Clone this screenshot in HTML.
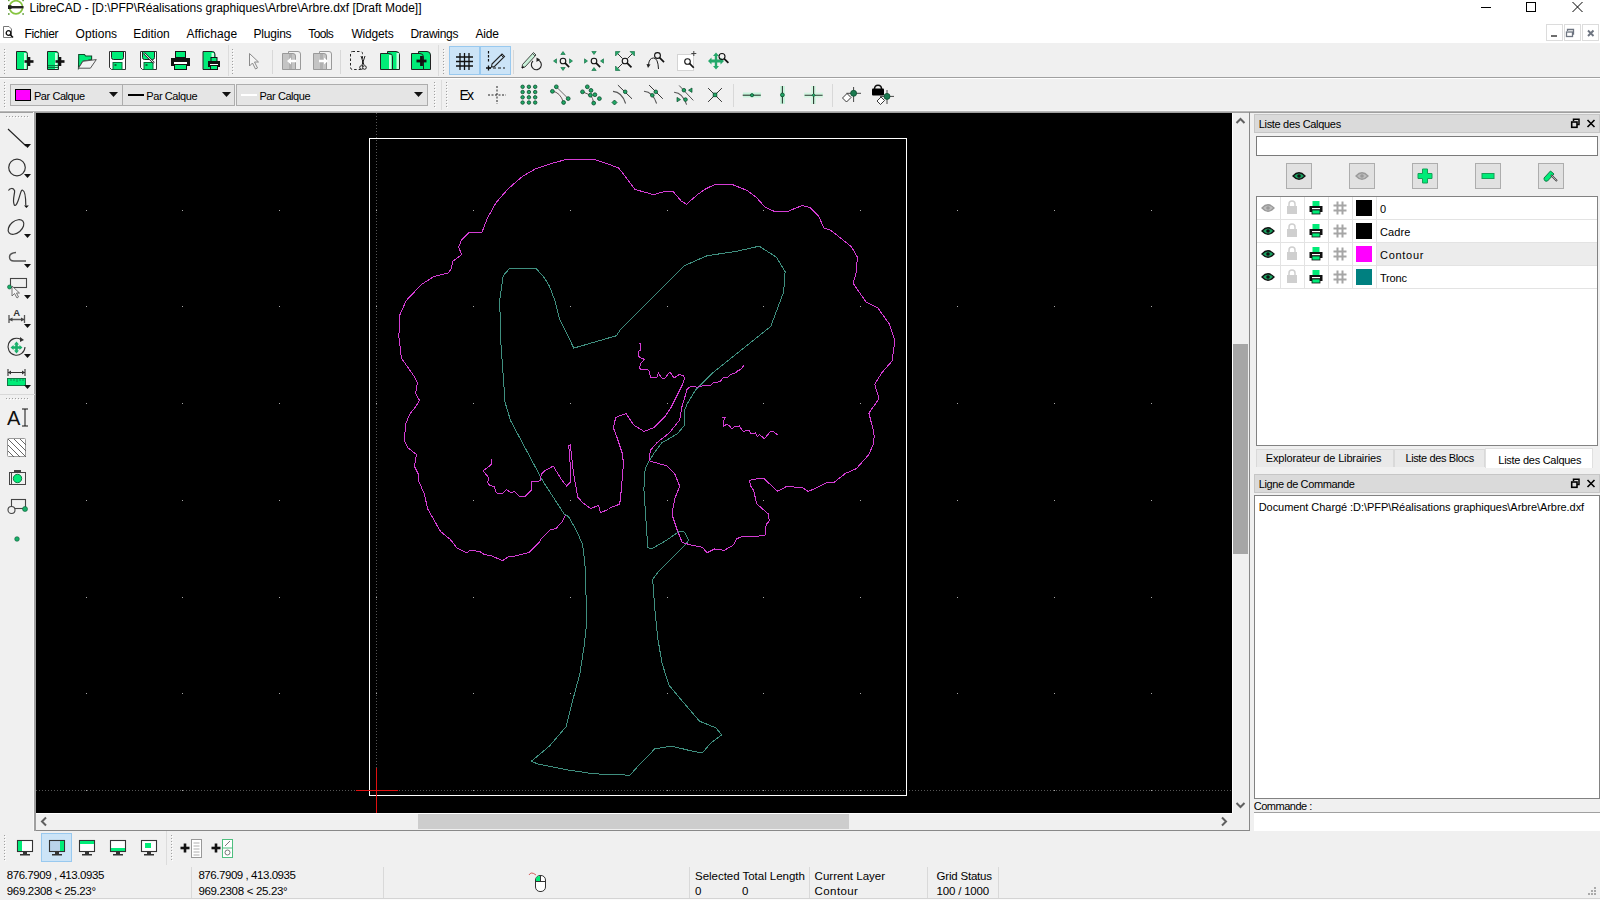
<!DOCTYPE html>
<html><head><meta charset="utf-8">
<style>
*{margin:0;padding:0;box-sizing:border-box}
html,body{width:1600px;height:900px;overflow:hidden;background:#f0f0f0;font-family:"Liberation Sans",sans-serif;font-size:11px;color:#000}
.a{position:absolute;display:block}
.t{position:absolute;white-space:nowrap;line-height:1}
</style></head><body>
<div class="a" style="left:0px;top:0px;width:1600px;height:43px;background:#fff;"></div>
<svg class="a" style="left:0px;top:0px" width="26" height="17" viewBox="0 0 26 17" ><circle cx="16" cy="7.3" r="6.6" fill="none" stroke="#86c440" stroke-width="1.7"/><rect x="8" y="6" width="15.5" height="2.4" fill="#222"/><rect x="8" y="5.2" width="3.5" height="3.8" fill="#222"/><g fill="#5e9a38"><rect x="8" y="0" width="1.6" height="1.2"/><rect x="22.3" y="0" width="1.6" height="1.2"/><rect x="8" y="13.2" width="1.6" height="1.6"/><rect x="22.3" y="13.2" width="1.6" height="1.6"/></g></svg>
<div class="t" style="left:29.50px;top:2px;font-size:12px;letter-spacing:-0.021px;">LibreCAD - [D:\PFP\Réalisations graphiques\Arbre\Arbre.dxf [Draft Mode]]</div>
<svg class="a" style="left:1476px;top:0px" width="124" height="16" viewBox="0 0 124 16" ><rect x="5" y="7" width="10" height="1" fill="#000"/><rect x="50.5" y="2.5" width="9" height="9" fill="none" stroke="#000"/><path d="M96.5 2 L106.5 12 M106.5 2 L96.5 12" stroke="#000" stroke-width="1"/></svg>
<svg class="a" style="left:2px;top:26px" width="13" height="13" viewBox="0 0 13 13" ><path d="M1.5 0.5 H7 L9.5 3 V11.5 H1.5 Z" fill="#fff" stroke="#777"/><circle cx="6.5" cy="7" r="2.3" fill="none" stroke="#111" stroke-width="1.3"/><path d="M8 8.5 L11 11.5" stroke="#111" stroke-width="1.6"/></svg>
<div class="t" style="left:24.50px;top:28px;font-size:12px;letter-spacing:-0.333px;">Fichier</div>
<div class="t" style="left:75.60px;top:28px;font-size:12px;letter-spacing:0.025px;">Options</div>
<div class="t" style="left:133.20px;top:28px;font-size:12px;letter-spacing:-0.025px;">Edition</div>
<div class="t" style="left:186.50px;top:28px;font-size:12px;letter-spacing:0.119px;">Affichage</div>
<div class="t" style="left:253.50px;top:28px;font-size:12px;letter-spacing:-0.208px;">Plugins</div>
<div class="t" style="left:308.30px;top:28px;font-size:12px;letter-spacing:-0.650px;">Tools</div>
<div class="t" style="left:351.40px;top:28px;font-size:12px;letter-spacing:-0.175px;">Widgets</div>
<div class="t" style="left:410.40px;top:28px;font-size:12px;letter-spacing:-0.271px;">Drawings</div>
<div class="t" style="left:475.40px;top:28px;font-size:12px;letter-spacing:-0.133px;">Aide</div>
<div class="a" style="left:1546px;top:24px;width:17px;height:17px;background:#fff;border:1px solid #dcdcdc"></div>
<div class="a" style="left:1564px;top:24px;width:17px;height:17px;background:#fff;border:1px solid #dcdcdc"></div>
<div class="a" style="left:1582px;top:24px;width:17px;height:17px;background:#fff;border:1px solid #dcdcdc"></div>
<svg class="a" style="left:1546px;top:24px" width="54" height="17" viewBox="0 0 54 17" ><rect x="5" y="11" width="6" height="2" fill="#6d6d6d"/><path d="M21.5 7 V5.5 H27.5 V10 H26" fill="none" stroke="#6d7480" stroke-width="1.3"/><rect x="20.5" y="8" width="6" height="4.5" fill="#fff" stroke="#6d7480" stroke-width="1.3"/><path d="M42 6.5 L47.5 12 M47.5 6.5 L42 12" stroke="#6d7480" stroke-width="1.9"/></svg>
<div class="a" style="left:0px;top:77px;width:1600px;height:1px;background:#a0a0a0;"></div>
<div class="a" style="left:0px;top:78px;width:1600px;height:1px;background:#fff;"></div>
<div class="a" style="left:0px;top:110px;width:1600px;height:1px;background:#f6f6f6;"></div>
<div class="a" style="left:0px;top:111px;width:1600px;height:1px;background:#b8b8b8;"></div>
<div class="a" style="left:0px;top:112px;width:1600px;height:1px;background:#a0a0a0;"></div>
<svg class="a" style="left:4px;top:49px" width="2" height="25" viewBox="0 0 2 25" ><rect x="0" y="0" width="1" height="1" fill="#a0a0a0"/><rect x="1" y="1" width="1" height="1" fill="#fff"/><rect x="0" y="3" width="1" height="1" fill="#a0a0a0"/><rect x="1" y="4" width="1" height="1" fill="#fff"/><rect x="0" y="6" width="1" height="1" fill="#a0a0a0"/><rect x="1" y="7" width="1" height="1" fill="#fff"/><rect x="0" y="9" width="1" height="1" fill="#a0a0a0"/><rect x="1" y="10" width="1" height="1" fill="#fff"/><rect x="0" y="12" width="1" height="1" fill="#a0a0a0"/><rect x="1" y="13" width="1" height="1" fill="#fff"/><rect x="0" y="15" width="1" height="1" fill="#a0a0a0"/><rect x="1" y="16" width="1" height="1" fill="#fff"/><rect x="0" y="18" width="1" height="1" fill="#a0a0a0"/><rect x="1" y="19" width="1" height="1" fill="#fff"/><rect x="0" y="21" width="1" height="1" fill="#a0a0a0"/><rect x="1" y="22" width="1" height="1" fill="#fff"/><rect x="0" y="24" width="1" height="1" fill="#a0a0a0"/><rect x="1" y="25" width="1" height="1" fill="#fff"/></svg>
<svg class="a" style="left:232px;top:49px" width="2" height="25" viewBox="0 0 2 25" ><rect x="0" y="0" width="1" height="1" fill="#a0a0a0"/><rect x="1" y="1" width="1" height="1" fill="#fff"/><rect x="0" y="3" width="1" height="1" fill="#a0a0a0"/><rect x="1" y="4" width="1" height="1" fill="#fff"/><rect x="0" y="6" width="1" height="1" fill="#a0a0a0"/><rect x="1" y="7" width="1" height="1" fill="#fff"/><rect x="0" y="9" width="1" height="1" fill="#a0a0a0"/><rect x="1" y="10" width="1" height="1" fill="#fff"/><rect x="0" y="12" width="1" height="1" fill="#a0a0a0"/><rect x="1" y="13" width="1" height="1" fill="#fff"/><rect x="0" y="15" width="1" height="1" fill="#a0a0a0"/><rect x="1" y="16" width="1" height="1" fill="#fff"/><rect x="0" y="18" width="1" height="1" fill="#a0a0a0"/><rect x="1" y="19" width="1" height="1" fill="#fff"/><rect x="0" y="21" width="1" height="1" fill="#a0a0a0"/><rect x="1" y="22" width="1" height="1" fill="#fff"/><rect x="0" y="24" width="1" height="1" fill="#a0a0a0"/><rect x="1" y="25" width="1" height="1" fill="#fff"/></svg>
<svg class="a" style="left:443px;top:49px" width="2" height="25" viewBox="0 0 2 25" ><rect x="0" y="0" width="1" height="1" fill="#a0a0a0"/><rect x="1" y="1" width="1" height="1" fill="#fff"/><rect x="0" y="3" width="1" height="1" fill="#a0a0a0"/><rect x="1" y="4" width="1" height="1" fill="#fff"/><rect x="0" y="6" width="1" height="1" fill="#a0a0a0"/><rect x="1" y="7" width="1" height="1" fill="#fff"/><rect x="0" y="9" width="1" height="1" fill="#a0a0a0"/><rect x="1" y="10" width="1" height="1" fill="#fff"/><rect x="0" y="12" width="1" height="1" fill="#a0a0a0"/><rect x="1" y="13" width="1" height="1" fill="#fff"/><rect x="0" y="15" width="1" height="1" fill="#a0a0a0"/><rect x="1" y="16" width="1" height="1" fill="#fff"/><rect x="0" y="18" width="1" height="1" fill="#a0a0a0"/><rect x="1" y="19" width="1" height="1" fill="#fff"/><rect x="0" y="21" width="1" height="1" fill="#a0a0a0"/><rect x="1" y="22" width="1" height="1" fill="#fff"/><rect x="0" y="24" width="1" height="1" fill="#a0a0a0"/><rect x="1" y="25" width="1" height="1" fill="#fff"/></svg>
<svg class="a" style="left:4px;top:82px" width="2" height="26" viewBox="0 0 2 26" ><rect x="0" y="0" width="1" height="1" fill="#a0a0a0"/><rect x="1" y="1" width="1" height="1" fill="#fff"/><rect x="0" y="3" width="1" height="1" fill="#a0a0a0"/><rect x="1" y="4" width="1" height="1" fill="#fff"/><rect x="0" y="6" width="1" height="1" fill="#a0a0a0"/><rect x="1" y="7" width="1" height="1" fill="#fff"/><rect x="0" y="9" width="1" height="1" fill="#a0a0a0"/><rect x="1" y="10" width="1" height="1" fill="#fff"/><rect x="0" y="12" width="1" height="1" fill="#a0a0a0"/><rect x="1" y="13" width="1" height="1" fill="#fff"/><rect x="0" y="15" width="1" height="1" fill="#a0a0a0"/><rect x="1" y="16" width="1" height="1" fill="#fff"/><rect x="0" y="18" width="1" height="1" fill="#a0a0a0"/><rect x="1" y="19" width="1" height="1" fill="#fff"/><rect x="0" y="21" width="1" height="1" fill="#a0a0a0"/><rect x="1" y="22" width="1" height="1" fill="#fff"/><rect x="0" y="24" width="1" height="1" fill="#a0a0a0"/><rect x="1" y="25" width="1" height="1" fill="#fff"/></svg>
<svg class="a" style="left:434px;top:82px" width="2" height="26" viewBox="0 0 2 26" ><rect x="0" y="0" width="1" height="1" fill="#a0a0a0"/><rect x="1" y="1" width="1" height="1" fill="#fff"/><rect x="0" y="3" width="1" height="1" fill="#a0a0a0"/><rect x="1" y="4" width="1" height="1" fill="#fff"/><rect x="0" y="6" width="1" height="1" fill="#a0a0a0"/><rect x="1" y="7" width="1" height="1" fill="#fff"/><rect x="0" y="9" width="1" height="1" fill="#a0a0a0"/><rect x="1" y="10" width="1" height="1" fill="#fff"/><rect x="0" y="12" width="1" height="1" fill="#a0a0a0"/><rect x="1" y="13" width="1" height="1" fill="#fff"/><rect x="0" y="15" width="1" height="1" fill="#a0a0a0"/><rect x="1" y="16" width="1" height="1" fill="#fff"/><rect x="0" y="18" width="1" height="1" fill="#a0a0a0"/><rect x="1" y="19" width="1" height="1" fill="#fff"/><rect x="0" y="21" width="1" height="1" fill="#a0a0a0"/><rect x="1" y="22" width="1" height="1" fill="#fff"/><rect x="0" y="24" width="1" height="1" fill="#a0a0a0"/><rect x="1" y="25" width="1" height="1" fill="#fff"/></svg>
<svg class="a" style="left:446px;top:82px" width="2" height="26" viewBox="0 0 2 26" ><rect x="0" y="0" width="1" height="1" fill="#a0a0a0"/><rect x="1" y="1" width="1" height="1" fill="#fff"/><rect x="0" y="3" width="1" height="1" fill="#a0a0a0"/><rect x="1" y="4" width="1" height="1" fill="#fff"/><rect x="0" y="6" width="1" height="1" fill="#a0a0a0"/><rect x="1" y="7" width="1" height="1" fill="#fff"/><rect x="0" y="9" width="1" height="1" fill="#a0a0a0"/><rect x="1" y="10" width="1" height="1" fill="#fff"/><rect x="0" y="12" width="1" height="1" fill="#a0a0a0"/><rect x="1" y="13" width="1" height="1" fill="#fff"/><rect x="0" y="15" width="1" height="1" fill="#a0a0a0"/><rect x="1" y="16" width="1" height="1" fill="#fff"/><rect x="0" y="18" width="1" height="1" fill="#a0a0a0"/><rect x="1" y="19" width="1" height="1" fill="#fff"/><rect x="0" y="21" width="1" height="1" fill="#a0a0a0"/><rect x="1" y="22" width="1" height="1" fill="#fff"/><rect x="0" y="24" width="1" height="1" fill="#a0a0a0"/><rect x="1" y="25" width="1" height="1" fill="#fff"/></svg>
<div class="a" style="left:228px;top:45px;width:1px;height:31px;background:#dcdcdc;"></div>
<div class="a" style="left:438px;top:45px;width:1px;height:31px;background:#dcdcdc;"></div>
<div class="a" style="left:272px;top:50px;width:1px;height:24px;background:#d8d8d8;"></div>
<div class="a" style="left:340px;top:50px;width:1px;height:24px;background:#d8d8d8;"></div>
<div class="a" style="left:513px;top:50px;width:1px;height:24px;background:#d8d8d8;"></div>
<div class="a" style="left:441px;top:80px;width:1px;height:30px;background:#dcdcdc;"></div>
<div class="a" style="left:733px;top:84px;width:1px;height:23px;background:#d8d8d8;"></div>
<div class="a" style="left:832px;top:84px;width:1px;height:23px;background:#d8d8d8;"></div>
<svg class="a" style="left:14px;top:50px" width="22" height="22" viewBox="0 0 22 22" ><path d="M2.5 1.5 H11 Q13.5 1.5 13.5 4.5 V19.5 H2.5 Z" fill="#00ec78" stroke="#222"/><rect x="10" y="3" width="2.5" height="16" fill="#c8ffe0"/><rect x="10.5" y="10.2" width="9.0" height="2.6" fill="#111"/><rect x="13.7" y="7.0" width="2.6" height="9.0" fill="#111"/></svg>
<svg class="a" style="left:45px;top:50px" width="22" height="22" viewBox="0 0 22 22" ><path d="M2.5 1.5 H11 Q13.5 1.5 13.5 4.5 V19.5 H2.5 Z" fill="#00ec78" stroke="#222"/><rect x="10" y="3" width="2.5" height="16" fill="#c8ffe0"/><rect x="3" y="15" width="10" height="1.2" fill="#087a40"/><rect x="3" y="17" width="10" height="1" fill="#087a40"/><rect x="10.5" y="10.2" width="9.0" height="2.6" fill="#111"/><rect x="13.7" y="7.0" width="2.6" height="9.0" fill="#111"/></svg>
<svg class="a" style="left:76px;top:50px" width="22" height="22" viewBox="0 0 22 22" ><path d="M2.7 4.5 H8.4 L9.7 6 H15.6 V9.6 L11.9 10.4 L6.9 11.3 L2.5 18.2 Z" fill="#00ec78" stroke="#0d4a2a" stroke-width="1.1"/><path d="M2.5 18.2 L6.9 11.3 L20.3 9.6 L14.4 18.2 Z" fill="#f2f2f2" stroke="#555" stroke-width="1"/></svg>
<svg class="a" style="left:108px;top:50px" width="20" height="22" viewBox="0 0 20 22" ><path d="M1.5 1.5 H17.5 V19.5 H3.5 L1.5 17.5 Z" fill="#fff" stroke="#333"/><path d="M3.5 1.5 H15.5 V7.5 Q15.5 9.5 13.5 9.5 H5.5 Q3.5 9.5 3.5 7.5 Z" fill="#00ec78" stroke="#222"/><rect x="5" y="12.5" width="9" height="7" fill="#00ec78" stroke="#0c6a3a"/><rect x="6.5" y="14" width="2" height="2" fill="#0c6a3a"/></svg>
<svg class="a" style="left:139px;top:50px" width="20" height="22" viewBox="0 0 20 22" ><path d="M1.5 1.5 H17.5 V19.5 H3.5 L1.5 17.5 Z" fill="#fff" stroke="#333"/><path d="M3.5 1.5 H15.5 V7.5 Q15.5 9.5 13.5 9.5 H5.5 Q3.5 9.5 3.5 7.5 Z" fill="#00ec78" stroke="#222"/><rect x="5" y="12.5" width="9" height="7" fill="#00ec78" stroke="#0c6a3a"/><rect x="6.5" y="14" width="2" height="2" fill="#0c6a3a"/><path d="M5 3 L15 13" stroke="#333" stroke-width="2.2"/><path d="M5.5 3.5 L14.5 12.5" stroke="#ddd" stroke-width="1"/></svg>
<svg class="a" style="left:170px;top:50px" width="21" height="22" viewBox="0 0 21 22" ><rect x="5.5" y="1.5" width="10" height="6" fill="#00ec78" stroke="#111"/><path d="M1 8 H20 V16 H17 V12 H4 V16 H1 Z" fill="#111"/><rect x="4" y="12" width="13" height="2" fill="#fff"/><rect x="4.5" y="14.5" width="12" height="5" fill="#00ec78" stroke="#111"/></svg>
<svg class="a" style="left:201px;top:50px" width="21" height="22" viewBox="0 0 21 22" ><path d="M2.0 1.5 H11.5 Q14.0 1.5 14.0 4.5 V19.5 H2.0 Z" fill="#00ec78" stroke="#222"/><rect x="10.5" y="3" width="2.5" height="16" fill="#c8ffe0"/><rect x="10" y="7.5" width="6" height="4" fill="#00ec78" stroke="#111"/><path d="M7 11 H19 V17 H17 V14 H9 V17 H7 Z" fill="#111"/><rect x="9" y="14" width="8" height="1.5" fill="#fff"/><rect x="9.5" y="15.5" width="7" height="4" fill="#00ec78" stroke="#111"/></svg>
<svg class="a" style="left:247px;top:51px" width="14" height="20" viewBox="0 0 14 20" ><path d="M2.5 2.5 V15 L5.5 12 L8.5 18 L10.5 17 L7.5 11 H11.5 Z" fill="#f4f4f4" stroke="#8a8a8a"/></svg>
<svg class="a" style="left:281px;top:50px" width="21" height="22" viewBox="0 0 21 22" ><path d="M7.5 1.5 H17 Q19.5 1.5 19.5 4 V19.5 H7.5 Z" fill="#f2f2f2" stroke="#9a9a9a"/><path d="M1.5 3.5 H12 Q14.5 3.5 14.5 6 V19.5 H1.5 Z" fill="#c4c4c4" stroke="#9a9a9a"/><rect x="8" y="4" width="3" height="15" fill="#b0b0b0"/><path d="M6 11 L10 7.5 V9.8 H15 V12.2 H10 V14.5 Z" fill="#fff"/></svg>
<svg class="a" style="left:312px;top:50px" width="21" height="22" viewBox="0 0 21 22" ><path d="M7.5 1.5 H17 Q19.5 1.5 19.5 4 V19.5 H7.5 Z" fill="#f2f2f2" stroke="#9a9a9a"/><path d="M1.5 3.5 H12 Q14.5 3.5 14.5 6 V19.5 H1.5 Z" fill="#c4c4c4" stroke="#9a9a9a"/><rect x="8" y="4" width="3" height="15" fill="#b0b0b0"/><path d="M16 11 L12 7.5 V9.8 H7 V12.2 H12 V14.5 Z" fill="#fff"/></svg>
<svg class="a" style="left:349px;top:50px" width="20" height="22" viewBox="0 0 20 22" ><rect x="1.5" y="1.5" width="12" height="18" rx="2" fill="none" stroke="#222" stroke-dasharray="2.5,2"/><path d="M12 6 L15 15 M16 6 L13 15" stroke="#222" stroke-width="1"/><circle cx="12.5" cy="17.5" r="1.8" fill="#f0f0f0" stroke="#222"/><circle cx="15.5" cy="17.5" r="1.8" fill="#f0f0f0" stroke="#222"/></svg>
<svg class="a" style="left:379px;top:50px" width="22" height="22" viewBox="0 0 22 22" ><path d="M8.5 1.5 H17 Q20.5 1.5 20.5 5 V19.5 H8.5 Z" fill="#00ec78" stroke="#222"/><path d="M1.5 3.5 H10 Q13.5 3.5 13.5 7 V19.5 H1.5 Z" fill="#00ec78" stroke="#222"/><rect x="10" y="5" width="2.5" height="14" fill="#c8ffe0"/><rect x="17.5" y="3" width="2.5" height="16" fill="#c8ffe0"/></svg>
<svg class="a" style="left:410px;top:50px" width="22" height="22" viewBox="0 0 22 22" ><path d="M8.5 1.5 H17 Q20.5 1.5 20.5 5 V19.5 H8.5 Z" fill="#00ec78" stroke="#222"/><path d="M1.5 3.5 H10 Q13.5 3.5 13.5 7 V19.5 H1.5 Z" fill="#00ec78" stroke="#222"/><rect x="6.5" y="9.6" width="10" height="2.8" fill="#111"/><rect x="10.1" y="6" width="2.8" height="10" fill="#111"/></svg>
<div class="a" style="left:449px;top:46px;width:31px;height:29px;background:#cce4f7;border:1px solid #99c9ef"></div>
<div class="a" style="left:480px;top:46px;width:31px;height:29px;background:#cce4f7;border:1px solid #99c9ef"></div>
<svg class="a" style="left:454px;top:51px" width="20" height="20" viewBox="0 0 20 20" ><path d="M6 2 V19 M10.5 2 V19 M15 2 V19 M2 6 H19 M2 10.5 H19 M2 15 H19" stroke="#111" stroke-width="1.3"/></svg>
<svg class="a" style="left:485px;top:50px" width="22" height="22" viewBox="0 0 22 22" ><path d="M3.5 1 V13" stroke="#111" stroke-dasharray="2.5,1.5" stroke-width="1.2"/><path d="M3 18 H20" stroke="#111" stroke-dasharray="3,2" stroke-width="1.2"/><path d="M1 18 H6 M3.5 15.5 V20.5" stroke="#111" stroke-width="1.3"/><path d="M7 14 L17 4 L19.5 6.5 L9.5 16.5 L6.5 17 Z" fill="none" stroke="#222" stroke-width="1.1"/><path d="M16 5 L18.5 7.5" stroke="#222"/></svg>
<svg class="a" style="left:521px;top:50px" width="22" height="22" viewBox="0 0 22 22" ><path d="M1.5 14.5 L12.5 2.5 L15 5 L4 17 L1 18 Z" fill="#c8f0d8" stroke="#333" stroke-width=".9"/><path d="M11.5 3.5 L14 6" stroke="#333" stroke-width=".8"/><path d="M1 18 L2.5 16.5" stroke="#111" stroke-width="1.6"/><path d="M12 11 A5 5 0 1 0 17 10" fill="none" stroke="#222" stroke-width="1.1"/><path d="M15.5 7.5 L19 9.5 L15.5 12 Z" fill="#222"/></svg>
<svg class="a" style="left:552px;top:50px" width="22" height="22" viewBox="0 0 22 22" ><path d="M11 1.5 L13.2 4.5 H8.8 Z M11 20.5 L13.2 17.5 H8.8 Z M1.5 11 L4.5 8.8 V13.2 Z M20.5 11 L17.5 8.8 V13.2 Z" fill="#24a86a" stroke="#0f6a3e" stroke-width=".6"/><circle cx="11" cy="11" r="2.8" fill="none" stroke="#111" stroke-width="1.1"/><path d="M12.959999999999999 12.959999999999999 L17.16 17.16" stroke="#111" stroke-width="1.7"/></svg>
<svg class="a" style="left:583px;top:50px" width="22" height="22" viewBox="0 0 22 22" ><path d="M11 4.5 L13.2 1.5 H8.8 Z M11 17.5 L13.2 20.5 H8.8 Z M4.5 11 L1.5 8.8 V13.2 Z M17.5 11 L20.5 8.8 V13.2 Z" fill="#24a86a" stroke="#0f6a3e" stroke-width=".6"/><circle cx="11" cy="11" r="2.8" fill="none" stroke="#111" stroke-width="1.1"/><path d="M12.959999999999999 12.959999999999999 L17.16 17.16" stroke="#111" stroke-width="1.7"/></svg>
<svg class="a" style="left:614px;top:50px" width="22" height="22" viewBox="0 0 22 22" ><path d="M3.5 3.5 L8.5 8.5 M18.5 3.5 L13.5 8.5 M3.5 18.5 L8.5 13.5" stroke="#222" stroke-width=".9"/><path d="M1.5 1.5 H6 L1.5 6 Z M20.5 1.5 H16 L20.5 6 Z M1.5 20.5 H6 L1.5 16 Z" fill="#24a86a" stroke="#0f6a3e" stroke-width=".6"/><circle cx="11" cy="11" r="2.8" fill="none" stroke="#111" stroke-width="1.1"/><path d="M12.959999999999999 12.959999999999999 L17.46 17.46" stroke="#111" stroke-width="1.7"/></svg>
<svg class="a" style="left:645px;top:50px" width="22" height="22" viewBox="0 0 22 22" ><path d="M3.5 15 Q4 8 8.5 8 Q13 8 13.5 19" fill="none" stroke="#222" stroke-width="1"/><path d="M1.5 14 L5.5 14.5 L3 18 Z" fill="#222"/><circle cx="12.5" cy="5.5" r="2.9" fill="none" stroke="#111" stroke-width="1.1"/><path d="M14.53 7.529999999999999 L19.03 12.03" stroke="#111" stroke-width="1.7"/></svg>
<svg class="a" style="left:676px;top:50px" width="22" height="22" viewBox="0 0 22 22" ><rect x="1.5" y="4.5" width="16" height="16" fill="#fff" stroke="#d4d4d4"/><circle cx="11.5" cy="11.5" r="2.8" fill="none" stroke="#111" stroke-width="1.1"/><path d="M13.459999999999999 13.459999999999999 L17.759999999999998 17.759999999999998" stroke="#111" stroke-width="1.7"/><path d="M17.8 1 V6 M15.3 3.5 H20.3" stroke="#444" stroke-width="1"/></svg>
<svg class="a" style="left:707px;top:50px" width="22" height="22" viewBox="0 0 22 22" ><path d="M9 2.5 L12 6 H10.2 V9.5 H13.5 V7.5 L17 11 L13.5 14.5 V12.5 H10.2 V16 H12 L9 19.5 L6 16 H7.8 V12.5 H4.5 V14.5 L1 11 L4.5 7.5 V9.5 H7.8 V6 H6 Z" fill="#24a86a"/><circle cx="15" cy="6.5" r="3" fill="none" stroke="#111" stroke-width="1.1"/><path d="M17.1 8.6 L21.400000000000002 12.899999999999999" stroke="#111" stroke-width="1.7"/></svg>
<div class="a" style="left:10px;top:84px;width:113px;height:22px;background:#e5e5e5;border:1px solid #adadad"></div>

<div class="a" style="left:122px;top:84px;width:113px;height:22px;background:#e5e5e5;border:1px solid #adadad"></div>

<div class="a" style="left:236px;top:84px;width:192px;height:22px;background:#e5e5e5;border:1px solid #adadad"></div>

<div class="a" style="left:15px;top:89px;width:16px;height:12px;background:#ff00ff;border:1px solid #000"></div>
<div class="t" style="left:33.90px;top:91px;font-size:11px;letter-spacing:-0.422px;">Par Calque</div>
<div class="a" style="left:128px;top:94px;width:16px;height:2px;background:#000;"></div>
<div class="t" style="left:146.30px;top:91px;font-size:11px;letter-spacing:-0.422px;">Par Calque</div>
<div class="a" style="left:241px;top:94px;width:16px;height:2px;background:#fff;"></div>
<div class="t" style="left:259.40px;top:91px;font-size:11px;letter-spacing:-0.422px;">Par Calque</div>
<svg class="a" style="left:109px;top:92px" width="9" height="5" viewBox="0 0 9 5" ><path d="M0 0 H9 L4.5 5 Z" fill="#111"/></svg>
<svg class="a" style="left:222px;top:92px" width="9" height="5" viewBox="0 0 9 5" ><path d="M0 0 H9 L4.5 5 Z" fill="#111"/></svg>
<svg class="a" style="left:414px;top:92px" width="9" height="5" viewBox="0 0 9 5" ><path d="M0 0 H9 L4.5 5 Z" fill="#111"/></svg>
<div class="t" style="left:459.40px;top:88px;font-size:14px;letter-spacing:-1.750px;">Ex</div>
<svg class="a" style="left:487px;top:85px" width="20" height="20" viewBox="0 0 20 20" ><path d="M10 1 V19 M1 10 H19" stroke="#222" stroke-width="1" stroke-dasharray="2,1.5"/></svg>
<svg class="a" style="left:519px;top:84px" width="20" height="22" viewBox="0 0 20 22" ><circle cx="3.6" cy="2.8" r="1.75" fill="#1fa865" stroke="#0b4a2c" stroke-width=".8"/><circle cx="3.6" cy="8.05" r="1.75" fill="#1fa865" stroke="#0b4a2c" stroke-width=".8"/><circle cx="3.6" cy="13.3" r="1.75" fill="#1fa865" stroke="#0b4a2c" stroke-width=".8"/><circle cx="3.6" cy="18.55" r="1.75" fill="#1fa865" stroke="#0b4a2c" stroke-width=".8"/><circle cx="9.9" cy="2.8" r="1.75" fill="#1fa865" stroke="#0b4a2c" stroke-width=".8"/><circle cx="9.9" cy="8.05" r="1.75" fill="#1fa865" stroke="#0b4a2c" stroke-width=".8"/><circle cx="9.9" cy="13.3" r="1.75" fill="#1fa865" stroke="#0b4a2c" stroke-width=".8"/><circle cx="9.9" cy="18.55" r="1.75" fill="#1fa865" stroke="#0b4a2c" stroke-width=".8"/><circle cx="16.2" cy="2.8" r="1.75" fill="#1fa865" stroke="#0b4a2c" stroke-width=".8"/><circle cx="16.2" cy="8.05" r="1.75" fill="#1fa865" stroke="#0b4a2c" stroke-width=".8"/><circle cx="16.2" cy="13.3" r="1.75" fill="#1fa865" stroke="#0b4a2c" stroke-width=".8"/><circle cx="16.2" cy="18.55" r="1.75" fill="#1fa865" stroke="#0b4a2c" stroke-width=".8"/></svg>
<svg class="a" style="left:549px;top:84px" width="22" height="22" viewBox="0 0 22 22" ><path d="M7.3 2.8 L19.2 14.6" stroke="#6a6a6a" stroke-width="1"/><path d="M3.4 7.3 Q11 8 14.6 18.5" fill="none" stroke="#6a5a5a" stroke-width="1"/><circle cx="7.3" cy="2.8" r="1.9" fill="#1fa865" stroke="#0b4a2c" stroke-width=".8"/><circle cx="3.4" cy="7.3" r="1.9" fill="#1fa865" stroke="#0b4a2c" stroke-width=".8"/><circle cx="19.2" cy="14.6" r="1.9" fill="#1fa865" stroke="#0b4a2c" stroke-width=".8"/><circle cx="14.6" cy="18.5" r="1.9" fill="#1fa865" stroke="#0b4a2c" stroke-width=".8"/></svg>
<svg class="a" style="left:580px;top:84px" width="22" height="22" viewBox="0 0 22 22" ><path d="M2.5 7.8 L10.5 11.2 Q13 14 13.7 19" fill="none" stroke="#6a5a5a" stroke-width="1"/><circle cx="7.3" cy="2.8" r="1.9" fill="#1fa865" stroke="#0b4a2c" stroke-width=".8"/><circle cx="2.5" cy="7.8" r="1.9" fill="#1fa865" stroke="#0b4a2c" stroke-width=".8"/><circle cx="11" cy="6.4" r="1.9" fill="#1fa865" stroke="#0b4a2c" stroke-width=".8"/><circle cx="10.4" cy="11.2" r="1.9" fill="#1fa865" stroke="#0b4a2c" stroke-width=".8"/><circle cx="14.9" cy="10.7" r="1.9" fill="#1fa865" stroke="#0b4a2c" stroke-width=".8"/><circle cx="19.4" cy="14.6" r="1.9" fill="#1fa865" stroke="#0b4a2c" stroke-width=".8"/><circle cx="13.7" cy="19.1" r="1.9" fill="#1fa865" stroke="#0b4a2c" stroke-width=".8"/></svg>
<svg class="a" style="left:611px;top:84px" width="22" height="22" viewBox="0 0 22 22" ><path d="M6.9 1.1 L21 14.8" stroke="#222" stroke-width=".9"/><path d="M2 7.4 Q11 8 14.6 19.5" fill="none" stroke="#555" stroke-width="1.1"/><circle cx="14.2" cy="7.8" r="1.8" fill="#1fa865" stroke="#0b4a2c" stroke-width=".8"/><path d="M3.5 16 L6 18.5 L3.5 21 L1 18.5 Z" fill="#1fa865" stroke="#0b4a2c" stroke-width=".8"/></svg>
<svg class="a" style="left:642px;top:84px" width="22" height="22" viewBox="0 0 22 22" ><path d="M7.1 1.1 L20.8 14.8" stroke="#222" stroke-width=".9"/><path d="M2 7.2 Q11 8 14.6 19.5" fill="none" stroke="#555" stroke-width="1.1"/><circle cx="13.8" cy="7.8" r="1.8" fill="#1fa865" stroke="#0b4a2c" stroke-width=".8"/><circle cx="10.3" cy="11.3" r="1.8" fill="#1fa865" stroke="#0b4a2c" stroke-width=".8"/></svg>
<svg class="a" style="left:673px;top:84px" width="22" height="22" viewBox="0 0 22 22" ><path d="M6.2 1.5 L20.3 16.4" stroke="#555" stroke-width="1"/><path d="M1.1 8.2 Q10 9 13.6 20.7" fill="none" stroke="#555" stroke-width="1.1"/><circle cx="10.9" cy="6.2" r="1.8" fill="#1fa865" stroke="#0b4a2c" stroke-width=".8"/><circle cx="12.5" cy="15.6" r="1.8" fill="#1fa865" stroke="#0b4a2c" stroke-width=".8"/><path d="M15.5 6.2 L19 4 V8.4 Z M7.5 15.6 L4 13.4 V17.8 Z" fill="#1fa865" stroke="#0b4a2c" stroke-width=".7"/></svg>
<svg class="a" style="left:704px;top:84px" width="22" height="22" viewBox="0 0 22 22" ><path d="M4.1 4.1 L17.9 17.9 M17.9 4.1 L4.1 17.9" stroke="#222" stroke-width=".9"/><rect x="9.2" y="9.1" width="3.6" height="3.6" fill="#1fa865" stroke="#0b4a2c" stroke-width=".8"/></svg>
<svg class="a" style="left:741px;top:84px" width="22" height="22" viewBox="0 0 22 22" ><rect x="2" y="8.5" width="18" height="5" fill="#c8f4dc"/><path d="M1.7 11.2 H19.8" stroke="#2a3a30" stroke-width="1.1"/><circle cx="11" cy="11.2" r="1.6" fill="#1fa865" stroke="#0b4a2c" stroke-width=".8"/></svg>
<svg class="a" style="left:772px;top:84px" width="22" height="22" viewBox="0 0 22 22" ><rect x="8" y="2" width="5" height="18" fill="#c8f4dc"/><path d="M10.4 2 V19.6" stroke="#2a3a30" stroke-width="1.1"/><circle cx="10.4" cy="10.9" r="1.9" fill="#1fa865" stroke="#0b4a2c" stroke-width=".8"/></svg>
<svg class="a" style="left:802px;top:84px" width="22" height="22" viewBox="0 0 22 22" ><rect x="9" y="2" width="5" height="18" fill="#d4f6e2"/><rect x="2" y="8.7" width="19" height="5" fill="#d4f6e2"/><path d="M11.6 2 V20 M2.6 11.2 H20.6" stroke="#2a3a30" stroke-width="1.1"/><path d="M11.6 9.5 L13.3 11.2 L11.6 12.9 L9.9 11.2 Z" fill="#1fa865" stroke="#0b4a2c" stroke-width=".6"/></svg>
<svg class="a" style="left:840px;top:84px" width="22" height="22" viewBox="0 0 22 22" ><path d="M2.5 14 L7 9.5 L11 13.5 L6.5 18 Z" fill="#fff" stroke="#222" stroke-width=".9"/><path d="M13.6 3 V18 M6.5 9.3 H21" stroke="#333" stroke-width=".9"/><circle cx="13.6" cy="9.3" r="3" fill="#1a7a50" stroke="#0b4a2c" stroke-width=".8"/></svg>
<svg class="a" style="left:870px;top:84px" width="24" height="24" viewBox="0 0 24 24" ><path d="M4.5 5 Q4.5 1.2 8 1.2 Q11.5 1.2 11.5 5" fill="none" stroke="#111" stroke-width="1.5"/><rect x="2" y="4.5" width="12" height="7" fill="#000" rx="1"/><path d="M7 17 L11 13 L14.5 16.5 L10.5 20.5 Z" fill="#fff" stroke="#222" stroke-width=".9"/><path d="M17 6 V20 M10 12.4 H24" stroke="#333" stroke-width=".9"/><circle cx="17" cy="12.4" r="3" fill="#1a7a50" stroke="#0b4a2c" stroke-width=".8"/></svg>
<div class="a" style="left:33px;top:112px;width:1px;height:719px;background:#f7f7f7;"></div>
<div class="a" style="left:34px;top:112px;width:2px;height:719px;background:#a0a0a0;"></div>
<svg class="a" style="left:6px;top:116px" width="24" height="2" viewBox="0 0 24 2" ><rect x="0" y="0" width="1" height="1" fill="#a0a0a0"/><rect x="1" y="1" width="1" height="1" fill="#fff"/><rect x="3" y="0" width="1" height="1" fill="#a0a0a0"/><rect x="4" y="1" width="1" height="1" fill="#fff"/><rect x="6" y="0" width="1" height="1" fill="#a0a0a0"/><rect x="7" y="1" width="1" height="1" fill="#fff"/><rect x="9" y="0" width="1" height="1" fill="#a0a0a0"/><rect x="10" y="1" width="1" height="1" fill="#fff"/><rect x="12" y="0" width="1" height="1" fill="#a0a0a0"/><rect x="13" y="1" width="1" height="1" fill="#fff"/><rect x="15" y="0" width="1" height="1" fill="#a0a0a0"/><rect x="16" y="1" width="1" height="1" fill="#fff"/><rect x="18" y="0" width="1" height="1" fill="#a0a0a0"/><rect x="19" y="1" width="1" height="1" fill="#fff"/><rect x="21" y="0" width="1" height="1" fill="#a0a0a0"/><rect x="22" y="1" width="1" height="1" fill="#fff"/></svg>
<svg class="a" style="left:6px;top:398px" width="24" height="2" viewBox="0 0 24 2" ><rect x="0" y="0" width="1" height="1" fill="#a0a0a0"/><rect x="1" y="1" width="1" height="1" fill="#fff"/><rect x="3" y="0" width="1" height="1" fill="#a0a0a0"/><rect x="4" y="1" width="1" height="1" fill="#fff"/><rect x="6" y="0" width="1" height="1" fill="#a0a0a0"/><rect x="7" y="1" width="1" height="1" fill="#fff"/><rect x="9" y="0" width="1" height="1" fill="#a0a0a0"/><rect x="10" y="1" width="1" height="1" fill="#fff"/><rect x="12" y="0" width="1" height="1" fill="#a0a0a0"/><rect x="13" y="1" width="1" height="1" fill="#fff"/><rect x="15" y="0" width="1" height="1" fill="#a0a0a0"/><rect x="16" y="1" width="1" height="1" fill="#fff"/><rect x="18" y="0" width="1" height="1" fill="#a0a0a0"/><rect x="19" y="1" width="1" height="1" fill="#fff"/><rect x="21" y="0" width="1" height="1" fill="#a0a0a0"/><rect x="22" y="1" width="1" height="1" fill="#fff"/></svg>
<div class="a" style="left:0px;top:394px;width:35px;height:1px;background:#d8d8d8;"></div>
<svg class="a" style="left:4px;top:126px" width="28" height="24" viewBox="0 0 28 24" ><path d="M4 3 L22 20" stroke="#222" stroke-width="1.1"/><path d="M20 18 H27 L23.5 22 Z" fill="#111"/></svg>
<svg class="a" style="left:4px;top:156px" width="28" height="24" viewBox="0 0 28 24" ><circle cx="13" cy="11.5" r="8.3" fill="none" stroke="#333" stroke-width="1.2"/><path d="M20 18 H27 L23.5 22 Z" fill="#111"/></svg>
<svg class="a" style="left:4px;top:186px" width="28" height="24" viewBox="0 0 28 24" ><path d="M4.4 4.5 C6 2 9.5 1.5 10.6 4.8 C11 8 8 14 10.3 19 C11.5 20 12.5 19 14 15 C16 10 17 3 18.7 4.2 C21 5 21.8 9 21.8 19.5" fill="none" stroke="#333" stroke-width="1.2"/><path d="M20 19.5 H24.9 L22.4 22 Z" fill="#111"/></svg>
<svg class="a" style="left:4px;top:216px" width="28" height="24" viewBox="0 0 28 24" ><ellipse cx="12" cy="11" rx="9" ry="5.8" transform="rotate(-40 12 11)" fill="none" stroke="#333" stroke-width="1.2"/><path d="M20 18 H27 L23.5 22 Z" fill="#111"/></svg>
<svg class="a" style="left:4px;top:246px" width="28" height="24" viewBox="0 0 28 24" ><path d="M12 6.5 Q5.5 7 5.5 11 Q5.5 15 10 15 H22" fill="none" stroke="#555" stroke-width="1.4"/><path d="M20 18 H27 L23.5 22 Z" fill="#111"/></svg>
<svg class="a" style="left:4px;top:276px" width="28" height="24" viewBox="0 0 28 24" ><rect x="6.5" y="2.5" width="16" height="9" fill="none" stroke="#444" stroke-width="1.1"/><circle cx="5.5" cy="11" r="2" fill="#19b06a" stroke="#0d5a36" stroke-width=".6"/><path d="M8 10 V20 L10.5 17.5 L13 22 L14.5 21 L12.5 17 H15.5 Z" fill="#f4f4f4" stroke="#555" stroke-width=".8"/><path d="M20 19 H27 L23.5 23 Z" fill="#111"/></svg>
<svg class="a" style="left:4px;top:306px" width="28" height="24" viewBox="0 0 28 24" ><path d="M5 9 V17 M20.5 9 V17 M5 13.5 H20.5" stroke="#555" stroke-width="1.3"/><path d="M5 13.5 L8.5 11.5 V15.5 Z M20.5 13.5 L17 11.5 V15.5 Z" fill="#444"/><text x="12.7" y="9.5" font-size="9.5" text-anchor="middle" font-family="Liberation Sans" font-weight="bold" fill="#333">A</text><path d="M20 18 H27 L23.5 22 Z" fill="#111"/></svg>
<svg class="a" style="left:4px;top:336px" width="28" height="24" viewBox="0 0 28 24" ><path d="M21 11 A8.5 8.5 0 1 1 17 3.5" fill="none" stroke="#333" stroke-width="1.1"/><path d="M16 1 L20 4 L16 6 Z" fill="#333"/><path d="M12.5 5.5 L15 8.5 H13.8 V10.3 H15.5 V9 L18.5 11.5 L15.5 14 V12.7 H13.8 V14.5 H15 L12.5 17.5 L10 14.5 H11.2 V12.7 H9.5 V14 L6.5 11.5 L9.5 9 V10.3 H11.2 V8.5 H10 Z" fill="#19b06a"/><path d="M20 18 H27 L23.5 22 Z" fill="#111"/></svg>
<svg class="a" style="left:4px;top:366px" width="28" height="26" viewBox="0 0 28 26" ><path d="M4 3 V10 M21 3 V10 M4 6.5 H21" stroke="#333" stroke-width="1.1"/><path d="M4 6.5 L7 4.5 V8.5 Z M21 6.5 L18 4.5 V8.5 Z" fill="#333"/><rect x="3.5" y="12.5" width="18" height="7" fill="#00ec78" stroke="#117a46"/><path d="M7 13 V15 M10 13 V15 M13 13 V16 M16 13 V15 M19 13 V15" stroke="#117a46" stroke-width=".8"/><path d="M20 19 H27 L23.5 23 Z" fill="#111"/></svg>
<svg class="a" style="left:6px;top:406px" width="24" height="24" viewBox="0 0 24 24" ><text x="1" y="19" font-size="20" font-family="Liberation Sans" fill="#111">A</text><path d="M16 3 H22 M19 3 V20 M16 20 H22" stroke="#111" stroke-width="1"/></svg>
<svg class="a" style="left:6px;top:437px" width="24" height="24" viewBox="0 0 24 24" ><rect x="1.5" y="1.5" width="18" height="18" rx="1" fill="#fff" stroke="#999"/><path d="M14 2 L20 8 M8 2 L20 14 M2 2 L20 20 M2 8 L14 20 M2 14 L8 20" stroke="#555" stroke-width=".9"/></svg>
<svg class="a" style="left:6px;top:466px" width="24" height="24" viewBox="0 0 24 24" ><rect x="3.5" y="6.5" width="16" height="12" fill="none" stroke="#444" stroke-width="1"/><rect x="8" y="4" width="7" height="3" fill="#444"/><circle cx="11.5" cy="12.5" r="4.2" fill="#00ec78" stroke="#117a46"/><path d="M5.5 7 V18" stroke="#444"/></svg>
<svg class="a" style="left:6px;top:496px" width="24" height="24" viewBox="0 0 24 24" ><rect x="5.5" y="3.5" width="14" height="9" fill="none" stroke="#444" stroke-width="1.1"/><circle cx="5.5" cy="14" r="3.5" fill="#f0f0f0" stroke="#444" stroke-width="1.1"/><circle cx="19" cy="13" r="2.5" fill="#19b06a" stroke="#0d5a36" stroke-width=".6"/></svg>
<svg class="a" style="left:6px;top:528px" width="24" height="24" viewBox="0 0 24 24" ><circle cx="11" cy="11" r="2.3" fill="#19b06a" stroke="#0d5a36" stroke-width=".6"/></svg>
<div class="a" style="left:36px;top:113px;width:1196px;height:700px;background:#000;"></div>
<svg class="a" style="left:36px;top:113px" width="1196" height="700" viewBox="0 0 1196 700" shape-rendering="crispEdges"><rect x="50" y="677" width="1" height="1" fill="#a8a8a8"/><rect x="50" y="580" width="1" height="1" fill="#a8a8a8"/><rect x="50" y="484" width="1" height="1" fill="#a8a8a8"/><rect x="50" y="387" width="1" height="1" fill="#a8a8a8"/><rect x="50" y="290" width="1" height="1" fill="#a8a8a8"/><rect x="50" y="193" width="1" height="1" fill="#a8a8a8"/><rect x="50" y="97" width="1" height="1" fill="#a8a8a8"/><rect x="146" y="677" width="1" height="1" fill="#a8a8a8"/><rect x="146" y="580" width="1" height="1" fill="#a8a8a8"/><rect x="146" y="484" width="1" height="1" fill="#a8a8a8"/><rect x="146" y="387" width="1" height="1" fill="#a8a8a8"/><rect x="146" y="290" width="1" height="1" fill="#a8a8a8"/><rect x="146" y="193" width="1" height="1" fill="#a8a8a8"/><rect x="146" y="97" width="1" height="1" fill="#a8a8a8"/><rect x="243" y="677" width="1" height="1" fill="#a8a8a8"/><rect x="243" y="580" width="1" height="1" fill="#a8a8a8"/><rect x="243" y="484" width="1" height="1" fill="#a8a8a8"/><rect x="243" y="387" width="1" height="1" fill="#a8a8a8"/><rect x="243" y="290" width="1" height="1" fill="#a8a8a8"/><rect x="243" y="193" width="1" height="1" fill="#a8a8a8"/><rect x="243" y="97" width="1" height="1" fill="#a8a8a8"/><rect x="340" y="677" width="1" height="1" fill="#a8a8a8"/><rect x="340" y="580" width="1" height="1" fill="#a8a8a8"/><rect x="340" y="484" width="1" height="1" fill="#a8a8a8"/><rect x="340" y="387" width="1" height="1" fill="#a8a8a8"/><rect x="340" y="290" width="1" height="1" fill="#a8a8a8"/><rect x="340" y="193" width="1" height="1" fill="#a8a8a8"/><rect x="340" y="97" width="1" height="1" fill="#a8a8a8"/><rect x="437" y="677" width="1" height="1" fill="#a8a8a8"/><rect x="437" y="580" width="1" height="1" fill="#a8a8a8"/><rect x="437" y="484" width="1" height="1" fill="#a8a8a8"/><rect x="437" y="387" width="1" height="1" fill="#a8a8a8"/><rect x="437" y="290" width="1" height="1" fill="#a8a8a8"/><rect x="437" y="193" width="1" height="1" fill="#a8a8a8"/><rect x="437" y="97" width="1" height="1" fill="#a8a8a8"/><rect x="534" y="677" width="1" height="1" fill="#a8a8a8"/><rect x="534" y="580" width="1" height="1" fill="#a8a8a8"/><rect x="534" y="484" width="1" height="1" fill="#a8a8a8"/><rect x="534" y="387" width="1" height="1" fill="#a8a8a8"/><rect x="534" y="290" width="1" height="1" fill="#a8a8a8"/><rect x="534" y="193" width="1" height="1" fill="#a8a8a8"/><rect x="534" y="97" width="1" height="1" fill="#a8a8a8"/><rect x="631" y="677" width="1" height="1" fill="#a8a8a8"/><rect x="631" y="580" width="1" height="1" fill="#a8a8a8"/><rect x="631" y="484" width="1" height="1" fill="#a8a8a8"/><rect x="631" y="387" width="1" height="1" fill="#a8a8a8"/><rect x="631" y="290" width="1" height="1" fill="#a8a8a8"/><rect x="631" y="193" width="1" height="1" fill="#a8a8a8"/><rect x="631" y="97" width="1" height="1" fill="#a8a8a8"/><rect x="727" y="677" width="1" height="1" fill="#a8a8a8"/><rect x="727" y="580" width="1" height="1" fill="#a8a8a8"/><rect x="727" y="484" width="1" height="1" fill="#a8a8a8"/><rect x="727" y="387" width="1" height="1" fill="#a8a8a8"/><rect x="727" y="290" width="1" height="1" fill="#a8a8a8"/><rect x="727" y="193" width="1" height="1" fill="#a8a8a8"/><rect x="727" y="97" width="1" height="1" fill="#a8a8a8"/><rect x="824" y="677" width="1" height="1" fill="#a8a8a8"/><rect x="824" y="580" width="1" height="1" fill="#a8a8a8"/><rect x="824" y="484" width="1" height="1" fill="#a8a8a8"/><rect x="824" y="387" width="1" height="1" fill="#a8a8a8"/><rect x="824" y="290" width="1" height="1" fill="#a8a8a8"/><rect x="824" y="193" width="1" height="1" fill="#a8a8a8"/><rect x="824" y="97" width="1" height="1" fill="#a8a8a8"/><rect x="921" y="677" width="1" height="1" fill="#a8a8a8"/><rect x="921" y="580" width="1" height="1" fill="#a8a8a8"/><rect x="921" y="484" width="1" height="1" fill="#a8a8a8"/><rect x="921" y="387" width="1" height="1" fill="#a8a8a8"/><rect x="921" y="290" width="1" height="1" fill="#a8a8a8"/><rect x="921" y="193" width="1" height="1" fill="#a8a8a8"/><rect x="921" y="97" width="1" height="1" fill="#a8a8a8"/><rect x="1018" y="677" width="1" height="1" fill="#a8a8a8"/><rect x="1018" y="580" width="1" height="1" fill="#a8a8a8"/><rect x="1018" y="484" width="1" height="1" fill="#a8a8a8"/><rect x="1018" y="387" width="1" height="1" fill="#a8a8a8"/><rect x="1018" y="290" width="1" height="1" fill="#a8a8a8"/><rect x="1018" y="193" width="1" height="1" fill="#a8a8a8"/><rect x="1018" y="97" width="1" height="1" fill="#a8a8a8"/><rect x="1115" y="677" width="1" height="1" fill="#a8a8a8"/><rect x="1115" y="580" width="1" height="1" fill="#a8a8a8"/><rect x="1115" y="484" width="1" height="1" fill="#a8a8a8"/><rect x="1115" y="387" width="1" height="1" fill="#a8a8a8"/><rect x="1115" y="290" width="1" height="1" fill="#a8a8a8"/><rect x="1115" y="193" width="1" height="1" fill="#a8a8a8"/><rect x="1115" y="97" width="1" height="1" fill="#a8a8a8"/><path d="M0 677.5 H1196" stroke="#555" stroke-width="1" stroke-dasharray="1,2"/><path d="M340.5 0 V677" stroke="#555" stroke-width="1" stroke-dasharray="1,2"/><rect x="333.5" y="25.5" width="537" height="657" fill="none" stroke="#fff" stroke-width="1"/><polyline points="495.3,648.3 513.4,633.1 530.1,613.6 535.6,591.4 543.9,560.8 548.1,533.1 550.9,508.1 548.9,449.7 546.5,431.5 540.5,417.5 532.5,403.5 528.5,401.5 506.5,367.5 490.5,337.5 474.5,307.5 468.5,287.5 468.5,280.6 464.9,230.8 463.7,187.5 467.2,162.7 473.5,155.5 500.1,155.5 508.1,164.5 513.5,173.3 518.8,187.5 523.6,205.9 537.8,235.1 580.5,222.7 584.5,216.4 613.4,187.5 648.0,152.8 671.2,142.7 700.0,138.4 723.1,133.2 740.5,144.2 749.1,158.6 747.7,178.8 734.7,213.5 705.8,236.6 676.9,259.7 659.6,277.0 650.9,291.5 648.8,296.7 648.8,312.0 641.1,320.9 625.8,329.9 618.1,340.1 611.8,350.3 609.2,355.4 607.9,375.9 609.2,396.3 611.8,434.6 615.6,435.9 630.9,427.0 643.7,418.0 648.8,419.3 652.6,427.0 649.5,431.7 638.4,442.8 621.7,459.4 616.7,466.4 618.9,496.9 621.7,524.7 625.9,549.7 632.8,571.9 646.7,588.6 663.4,608.1 680.1,615.0 685.6,621.9 674.5,630.3 666.2,640.0 652.3,637.2 635.6,633.1 618.9,635.8 605.1,649.7 593.9,662.2 557.8,660.8 530.1,656.7 502.3,651.1 495.3,648.3" fill="none" stroke="#3f8f7f" stroke-width="1"/><polyline points="529.5,402.5 528.1,404.6 526.5,408.6 519.9,415.5 513.5,417.2 505.3,425.7 502.9,429.8 493.1,439.5 485.8,441.2 480.9,442.8 472.8,443.6 466.3,447.7 455.7,442.8 448.4,441.6 443.5,438.3 433.8,437.5 430.5,439.9 425.6,437.5 420.8,434.7 414.3,426.5 404.5,418.4 400.5,411.5 391.5,395.5 388.5,381.5 382.5,367.5 382.5,361.5 378.5,353.5 380.5,341.5 371.5,334.5 368.5,327.5 369.5,311.5 373.5,301.5 380.5,292.5 383.5,287.5 379.6,280.6 381.4,269.9 377.8,262.8 365.4,245.1 362.9,223.7 363.6,202.4 370.3,187.5 385.4,171.5 397.9,163.5 412.1,160.0 415.6,155.5 416.5,148.5 422.7,144.0 425.5,141.3 422.7,134.2 425.5,127.1 432.5,120.0 445.9,119.5 451.2,105.5 460.1,89.5 472.5,75.5 486.8,63.1 499.2,56.0 515.2,50.5 531.2,46.2 557.9,46.2 568.5,49.7 582.8,55.1 597.0,73.7 598.8,76.5 604.5,78.0 617.5,81.6 629.9,78.1 636.8,78.1 645.0,87.8 650.5,91.2 661.5,81.6 669.5,76.0 678.0,71.9 697.3,71.9 711.0,77.4 720.5,84.5 728.9,94.0 738.6,98.5 750.9,98.8 757.5,96.0 766.1,92.6 774.3,94.6 782.5,102.9 788.1,115.3 793.6,116.6 804.5,124.9 815.6,134.0 821.4,144.2 819.9,161.5 817.0,170.2 830.0,188.9 841.6,194.7 853.1,210.6 858.9,227.9 856.0,248.1 845.9,259.7 838.7,271.2 843.0,285.7 832.9,300.1 837.3,317.5 838.2,323.5 837.4,330.8 832.8,341.7 820.3,355.7 809.4,360.4 798.5,369.0 790.8,369.7 778.3,376.0 772.1,378.3 765.9,374.4 750.3,373.6 741.7,378.3 731.6,369.0 728.5,365.8 720.7,365.8 713.7,367.4 714.5,372.9 717.6,377.5 720.7,390.7 728.5,397.7 732.4,400.9 733.2,407.9 730.1,411.7 729.3,421.9 720.7,423.4 706.7,423.4 700.5,425.8 697.4,432.0 688.1,437.4 678.7,435.9 671.0,439.8 666.3,434.3 655.4,432.0 649.2,430.4 646.2,429.5 641.1,416.7 636.0,401.4 638.6,386.1 643.7,373.3 638.6,360.5 630.9,352.9 613.0,347.8 614.3,337.5 620.7,329.9 633.5,319.7 643.7,306.9 646.2,292.5 649.3,282.5 650.8,276.5 654.5,273.5 658.3,273.5 661.3,274.3 666.5,272.8 674.0,272.8 677.0,269.8 680.5,269.5 684.5,268.3 687.5,264.1 692.0,264.1 694.3,261.5 698.8,260.4 701.8,257.8 704.5,256.5 708.2,252.1" fill="none" stroke="#d43cd4" stroke-width="1"/><polyline points="602.8,229.6 604.3,230.8 605.0,233.8 604.6,236.8 602.4,238.6 602.0,242.0 603.5,244.3 608.8,246.5 605.0,250.3 603.1,254.8 605.8,257.0 611.8,256.6 613.3,258.5 614.4,264.5 620.8,264.9 622.3,260.0 626.0,265.3 628.6,265.6 633.9,258.9 638.0,264.9 643.3,261.5 647.8,263.0 648.5,266.0 646.3,272.0 641.0,282.5 634.5,295.5 628.4,304.3 618.1,314.6 607.9,318.4 597.7,312.0 590.0,300.5 579.8,304.3 577.3,314.6 581.1,324.8 586.2,340.1 587.5,350.3 586.2,365.6 584.9,381.0 583.7,391.2 574.5,394.5 572.5,396.5 564.5,399.5 562.5,392.5 554.5,395.5 546.5,389.5 541.7,384.0 537.5,359.9 534.8,336.5 534.1,332.0 532.0,332.4 533.4,337.9 534.8,362.7 534.8,368.9 530.7,373.0 525.1,366.1 517.2,353.0 508.6,357.9 505.2,361.3 504.5,367.9 495.5,368.5 495.9,376.5 492.1,380.6 488.6,383.7 483.8,384.0 478.3,378.5 474.9,379.9 470.7,376.5 466.6,380.6 460.4,379.9 458.3,373.7 453.5,372.3 451.5,369.6 452.8,364.8 447.0,357.9 450.8,355.1 455.9,351.0 455.9,345.5" fill="none" stroke="#d43cd4" stroke-width="1"/><polyline points="685.6,304.9 688.9,304.9 687.8,307.3 688.0,313.0 690.9,311.2 693.5,313.0 696.1,316.1 698.3,313.9 703.6,313.0 705.3,316.1 707.5,318.7 709.2,317.8 713.2,317.8 714.9,320.9 719.3,320.0 721.5,323.5 723.7,321.7 728.5,325.7 734.6,318.2 737.7,318.7 741.6,322.0" fill="none" stroke="#d43cd4" stroke-width="1"/><path d="M340.5 655 V700 M320 677.5 H362" stroke="#e01010" stroke-width="1"/></svg>
<div class="a" style="left:1232px;top:113px;width:1px;height:700px;background:#fff;"></div>
<div class="a" style="left:1233px;top:344px;width:15px;height:210px;background:#a6a6a6;"></div>
<svg class="a" style="left:1235px;top:116px" width="12" height="10" viewBox="0 0 12 10" ><path d="M1.5 7 L5.5 3 L9.5 7" fill="none" stroke="#606060" stroke-width="2"/></svg>
<svg class="a" style="left:1235px;top:800px" width="12" height="10" viewBox="0 0 12 10" ><path d="M1.5 3 L5.5 7 L9.5 3" fill="none" stroke="#606060" stroke-width="2"/></svg>
<div class="a" style="left:36px;top:813px;width:1196px;height:1px;background:#fff;"></div>
<div class="a" style="left:418px;top:814px;width:431px;height:15px;background:#cdcdcd;"></div>
<svg class="a" style="left:39px;top:816px" width="10" height="12" viewBox="0 0 10 12" ><path d="M7 1.5 L3 5.5 L7 9.5" fill="none" stroke="#606060" stroke-width="2"/></svg>
<svg class="a" style="left:1219px;top:816px" width="10" height="12" viewBox="0 0 10 12" ><path d="M3 1.5 L7 5.5 L3 9.5" fill="none" stroke="#606060" stroke-width="2"/></svg>
<div class="a" style="left:1249px;top:112px;width:1px;height:719px;background:#888;"></div>
<div class="a" style="left:36px;top:830px;width:1214px;height:1px;background:#888;"></div>
<div class="a" style="left:1254px;top:114px;width:346px;height:19px;background:#dadada;border:1px solid #c6c6c6"></div>
<div class="t" style="left:1258.70px;top:119px;font-size:11px;letter-spacing:-0.312px;">Liste des Calques</div>
<svg class="a" style="left:1566px;top:116px" width="34" height="14" viewBox="0 0 34 14" ><path d="M7.5 5 V3.2 H13 V8.5 H11" fill="none" stroke="#000" stroke-width="1.5"/><rect x="5.7" y="6" width="5.3" height="5.3" fill="#dadada" stroke="#000" stroke-width="1.6"/><path d="M21.5 4 L28.5 11 M28.5 4 L21.5 11" stroke="#000" stroke-width="1.6"/></svg>
<div class="a" style="left:1256px;top:136px;width:342px;height:20px;background:#fff;border:1px solid #7a7a7a"></div>
<div class="a" style="left:1286px;top:163px;width:26px;height:26px;background:#e1e1e1;border:1px solid #adadad"></div>
<div class="a" style="left:1349px;top:163px;width:26px;height:26px;background:#e1e1e1;border:1px solid #adadad"></div>
<div class="a" style="left:1412px;top:163px;width:26px;height:26px;background:#e1e1e1;border:1px solid #adadad"></div>
<div class="a" style="left:1475px;top:163px;width:26px;height:26px;background:#e1e1e1;border:1px solid #adadad"></div>
<div class="a" style="left:1538px;top:163px;width:26px;height:26px;background:#e1e1e1;border:1px solid #adadad"></div>
<svg class="a" style="left:1286px;top:163px" width="26" height="26" viewBox="0 0 26 26" ><path d="M7 13 Q13 6.5 19 13 Q13 19.5 7 13 Z" fill="#19a060" stroke="#111" stroke-width="1.3"/><circle cx="13" cy="13" r="1.8" fill="#111"/></svg>
<svg class="a" style="left:1349px;top:163px" width="26" height="26" viewBox="0 0 26 26" ><path d="M7 13 Q13 6.5 19 13 Q13 19.5 7 13 Z" fill="#bdbdbd" stroke="#9a9a9a" stroke-width="1.3"/><circle cx="13" cy="13" r="1.8" fill="#9a9a9a"/></svg>
<svg class="a" style="left:1412px;top:163px" width="26" height="26" viewBox="0 0 26 26" ><path d="M10.5 6 H15.5 V10.5 H20 V15.5 H15.5 V20 H10.5 V15.5 H6 V10.5 H10.5 Z" fill="#00ec78" stroke="#15a058" stroke-width="1"/></svg>
<svg class="a" style="left:1475px;top:163px" width="26" height="26" viewBox="0 0 26 26" ><rect x="7" y="10.5" width="12" height="5" fill="#00ec78" stroke="#15a058"/></svg>
<svg class="a" style="left:1538px;top:163px" width="26" height="26" viewBox="0 0 26 26" ><path d="M6 15 L12.5 8 L16 11 L9.5 18 Q6 19 6 15 Z" fill="#00ec78" stroke="#117a46"/><path d="M13 12 L19 18" stroke="#444" stroke-width="2"/><path d="M13.5 12.5 L18.5 17.5" stroke="#ddd" stroke-width=".7"/></svg>
<div class="a" style="left:1256px;top:196px;width:342px;height:250px;background:#fff;border:1px solid #828282"></div>
<div class="a" style="left:1257px;top:219px;width:340px;height:1px;background:#e3e3e3;"></div>
<div class="a" style="left:1257px;top:242px;width:340px;height:1px;background:#e3e3e3;"></div>
<div class="a" style="left:1257px;top:265px;width:340px;height:1px;background:#e3e3e3;"></div>
<div class="a" style="left:1257px;top:288px;width:340px;height:1px;background:#e3e3e3;"></div>
<div class="a" style="left:1280px;top:197px;width:1px;height:91px;background:#e3e3e3;"></div>
<div class="a" style="left:1304px;top:197px;width:1px;height:91px;background:#e3e3e3;"></div>
<div class="a" style="left:1328px;top:197px;width:1px;height:91px;background:#e3e3e3;"></div>
<div class="a" style="left:1352px;top:197px;width:1px;height:91px;background:#e3e3e3;"></div>
<div class="a" style="left:1376px;top:197px;width:1px;height:91px;background:#e3e3e3;"></div>
<div class="a" style="left:1377px;top:243px;width:220px;height:22px;background:#ececec;"></div>
<svg class="a" style="left:1256px;top:196px" width="130" height="100" viewBox="0 0 130 100" ><path d="M6 12 Q12 5.5 18 12 Q12 18.5 6 12 Z" fill="#bdbdbd" stroke="#9a9a9a" stroke-width="1.3"/><circle cx="12" cy="12" r="1.8" fill="#9a9a9a"/><path d="M33 10 V8 Q33 5 36 5 Q39 5 39 8 V10" fill="none" stroke="#cfcfcf" stroke-width="1.5"/><rect x="31" y="10" width="10" height="8" fill="#cfcfcf"/><rect x="56.5" y="5" width="7" height="5" fill="#00ec78"/><path d="M53.5 10 H66.5 V16 H53.5 Z" fill="#111"/><rect x="56" y="12" width="8" height="1.3" fill="#fff"/><rect x="56" y="14" width="8" height="4" fill="#00ec78" stroke="#111" stroke-width=".8"/><path d="M81.5 5.5 V18.5 M86.5 5.5 V18.5 M77.5 9.5 H90.5 M77.5 14.5 H90.5" stroke="#a6a6a6" stroke-width="2"/><rect x="100" y="4" width="16" height="16" fill="#000"/><path d="M6 35 Q12 28.5 18 35 Q12 41.5 6 35 Z" fill="#19a060" stroke="#111" stroke-width="1.3"/><circle cx="12" cy="35" r="1.8" fill="#111"/><path d="M33 33 V31 Q33 28 36 28 Q39 28 39 31 V33" fill="none" stroke="#cfcfcf" stroke-width="1.5"/><rect x="31" y="33" width="10" height="8" fill="#cfcfcf"/><rect x="56.5" y="28" width="7" height="5" fill="#00ec78"/><path d="M53.5 33 H66.5 V39 H53.5 Z" fill="#111"/><rect x="56" y="35" width="8" height="1.3" fill="#fff"/><rect x="56" y="37" width="8" height="4" fill="#00ec78" stroke="#111" stroke-width=".8"/><path d="M81.5 28.5 V41.5 M86.5 28.5 V41.5 M77.5 32.5 H90.5 M77.5 37.5 H90.5" stroke="#a6a6a6" stroke-width="2"/><rect x="100" y="27" width="16" height="16" fill="#000"/><path d="M6 58 Q12 51.5 18 58 Q12 64.5 6 58 Z" fill="#19a060" stroke="#111" stroke-width="1.3"/><circle cx="12" cy="58" r="1.8" fill="#111"/><path d="M33 56 V54 Q33 51 36 51 Q39 51 39 54 V56" fill="none" stroke="#cfcfcf" stroke-width="1.5"/><rect x="31" y="56" width="10" height="8" fill="#cfcfcf"/><rect x="56.5" y="51" width="7" height="5" fill="#00ec78"/><path d="M53.5 56 H66.5 V62 H53.5 Z" fill="#111"/><rect x="56" y="58" width="8" height="1.3" fill="#fff"/><rect x="56" y="60" width="8" height="4" fill="#00ec78" stroke="#111" stroke-width=".8"/><path d="M81.5 51.5 V64.5 M86.5 51.5 V64.5 M77.5 55.5 H90.5 M77.5 60.5 H90.5" stroke="#a6a6a6" stroke-width="2"/><rect x="100" y="50" width="16" height="16" fill="#ff00ff"/><path d="M6 81 Q12 74.5 18 81 Q12 87.5 6 81 Z" fill="#19a060" stroke="#111" stroke-width="1.3"/><circle cx="12" cy="81" r="1.8" fill="#111"/><path d="M33 79 V77 Q33 74 36 74 Q39 74 39 77 V79" fill="none" stroke="#cfcfcf" stroke-width="1.5"/><rect x="31" y="79" width="10" height="8" fill="#cfcfcf"/><rect x="56.5" y="74" width="7" height="5" fill="#00ec78"/><path d="M53.5 79 H66.5 V85 H53.5 Z" fill="#111"/><rect x="56" y="81" width="8" height="1.3" fill="#fff"/><rect x="56" y="83" width="8" height="4" fill="#00ec78" stroke="#111" stroke-width=".8"/><path d="M81.5 74.5 V87.5 M86.5 74.5 V87.5 M77.5 78.5 H90.5 M77.5 83.5 H90.5" stroke="#a6a6a6" stroke-width="2"/><rect x="100" y="73" width="16" height="16" fill="#008080"/></svg>
<div class="t" style="left:1380.00px;top:204px;font-size:11px;letter-spacing:0.000px;">0</div>
<div class="t" style="left:1380.00px;top:227px;font-size:11px;letter-spacing:0.125px;">Cadre</div>
<div class="t" style="left:1380.00px;top:250px;font-size:11px;letter-spacing:0.708px;">Contour</div>
<div class="t" style="left:1380.00px;top:273px;font-size:11px;letter-spacing:-0.188px;">Tronc</div>
<div class="a" style="left:1256px;top:449px;width:138px;height:18px;background:#e9e9e9;border:1px solid #d9d9d9;border-bottom:none"></div>
<div class="a" style="left:1394px;top:449px;width:91px;height:18px;background:#e9e9e9;border:1px solid #d9d9d9;border-bottom:none"></div>
<div class="a" style="left:1485px;top:448px;width:108px;height:20px;background:#fff;border:1px solid #e0e0e0;border-bottom:none"></div>
<div class="t" style="left:1265.70px;top:453px;font-size:11px;letter-spacing:-0.144px;">Explorateur de Librairies</div>
<div class="t" style="left:1405.40px;top:453px;font-size:11px;letter-spacing:-0.371px;">Liste des Blocs</div>
<div class="t" style="left:1498.30px;top:455px;font-size:11px;letter-spacing:-0.269px;">Liste des Calques</div>
<div class="a" style="left:1254px;top:474px;width:346px;height:19px;background:#dadada;border:1px solid #c6c6c6"></div>
<div class="t" style="left:1258.70px;top:479px;font-size:11px;letter-spacing:-0.375px;">Ligne de Commande</div>
<svg class="a" style="left:1566px;top:476px" width="34" height="14" viewBox="0 0 34 14" ><path d="M7.5 5 V3.2 H13 V8.5 H11" fill="none" stroke="#000" stroke-width="1.5"/><rect x="5.7" y="6" width="5.3" height="5.3" fill="#dadada" stroke="#000" stroke-width="1.6"/><path d="M21.5 4 L28.5 11 M28.5 4 L21.5 11" stroke="#000" stroke-width="1.6"/></svg>
<div class="a" style="left:1254px;top:495px;width:346px;height:304px;background:#fff;border:1px solid #828282"></div>
<div class="t" style="left:1258.70px;top:502px;font-size:11px;letter-spacing:-0.056px;">Document Chargé :D:\PFP\Réalisations graphiques\Arbre\Arbre.dxf</div>
<div class="t" style="left:1253.80px;top:801px;font-size:11px;letter-spacing:-0.500px;">Commande :</div>
<div class="a" style="left:1254px;top:812px;width:346px;height:1px;background:#a0a0a0;"></div>
<div class="a" style="left:1254px;top:813px;width:346px;height:18px;background:#fff;"></div>
<svg class="a" style="left:4px;top:835px" width="2" height="26" viewBox="0 0 2 26" ><rect x="0" y="0" width="1" height="1" fill="#a0a0a0"/><rect x="1" y="1" width="1" height="1" fill="#fff"/><rect x="0" y="3" width="1" height="1" fill="#a0a0a0"/><rect x="1" y="4" width="1" height="1" fill="#fff"/><rect x="0" y="6" width="1" height="1" fill="#a0a0a0"/><rect x="1" y="7" width="1" height="1" fill="#fff"/><rect x="0" y="9" width="1" height="1" fill="#a0a0a0"/><rect x="1" y="10" width="1" height="1" fill="#fff"/><rect x="0" y="12" width="1" height="1" fill="#a0a0a0"/><rect x="1" y="13" width="1" height="1" fill="#fff"/><rect x="0" y="15" width="1" height="1" fill="#a0a0a0"/><rect x="1" y="16" width="1" height="1" fill="#fff"/><rect x="0" y="18" width="1" height="1" fill="#a0a0a0"/><rect x="1" y="19" width="1" height="1" fill="#fff"/><rect x="0" y="21" width="1" height="1" fill="#a0a0a0"/><rect x="1" y="22" width="1" height="1" fill="#fff"/><rect x="0" y="24" width="1" height="1" fill="#a0a0a0"/><rect x="1" y="25" width="1" height="1" fill="#fff"/></svg>
<svg class="a" style="left:171px;top:835px" width="2" height="26" viewBox="0 0 2 26" ><rect x="0" y="0" width="1" height="1" fill="#a0a0a0"/><rect x="1" y="1" width="1" height="1" fill="#fff"/><rect x="0" y="3" width="1" height="1" fill="#a0a0a0"/><rect x="1" y="4" width="1" height="1" fill="#fff"/><rect x="0" y="6" width="1" height="1" fill="#a0a0a0"/><rect x="1" y="7" width="1" height="1" fill="#fff"/><rect x="0" y="9" width="1" height="1" fill="#a0a0a0"/><rect x="1" y="10" width="1" height="1" fill="#fff"/><rect x="0" y="12" width="1" height="1" fill="#a0a0a0"/><rect x="1" y="13" width="1" height="1" fill="#fff"/><rect x="0" y="15" width="1" height="1" fill="#a0a0a0"/><rect x="1" y="16" width="1" height="1" fill="#fff"/><rect x="0" y="18" width="1" height="1" fill="#a0a0a0"/><rect x="1" y="19" width="1" height="1" fill="#fff"/><rect x="0" y="21" width="1" height="1" fill="#a0a0a0"/><rect x="1" y="22" width="1" height="1" fill="#fff"/><rect x="0" y="24" width="1" height="1" fill="#a0a0a0"/><rect x="1" y="25" width="1" height="1" fill="#fff"/></svg>
<div class="a" style="left:166px;top:831px;width:1px;height:34px;background:#dcdcdc;"></div>
<div class="a" style="left:41px;top:833px;width:31px;height:29px;background:#cce4f7;border:1px solid #99c9ef"></div>
<svg class="a" style="left:16px;top:839px" width="18" height="17" viewBox="0 0 18 17" ><rect x="1.5" y="1.5" width="15" height="11" fill="#fff" stroke="#333" stroke-width="1.1"/><rect x="7" y="13" width="4" height="2" fill="#333"/><rect x="4" y="15" width="10" height="1.5" fill="#333"/><rect x="2" y="2" width="4" height="10" fill="#00ec78"/></svg>
<svg class="a" style="left:48px;top:839px" width="18" height="17" viewBox="0 0 18 17" ><rect x="1.5" y="1.5" width="15" height="11" fill="#b9d3ea" stroke="#333" stroke-width="1.1"/><rect x="12" y="2" width="4" height="10" fill="#00ec78"/><rect x="7" y="13" width="4" height="2" fill="#333"/><rect x="4" y="15" width="10" height="1.5" fill="#333"/></svg>
<svg class="a" style="left:78px;top:839px" width="18" height="17" viewBox="0 0 18 17" ><rect x="1.5" y="1.5" width="15" height="11" fill="#fff" stroke="#333" stroke-width="1.1"/><rect x="7" y="13" width="4" height="2" fill="#333"/><rect x="4" y="15" width="10" height="1.5" fill="#333"/><rect x="2" y="2" width="14" height="3" fill="#00ec78"/></svg>
<svg class="a" style="left:109px;top:839px" width="18" height="17" viewBox="0 0 18 17" ><rect x="1.5" y="1.5" width="15" height="11" fill="#fff" stroke="#333" stroke-width="1.1"/><rect x="7" y="13" width="4" height="2" fill="#333"/><rect x="4" y="15" width="10" height="1.5" fill="#333"/><rect x="2" y="9" width="14" height="3" fill="#00ec78"/></svg>
<svg class="a" style="left:140px;top:839px" width="18" height="17" viewBox="0 0 18 17" ><rect x="1.5" y="1.5" width="15" height="11" fill="#fff" stroke="#333" stroke-width="1.1"/><rect x="7" y="13" width="4" height="2" fill="#333"/><rect x="4" y="15" width="10" height="1.5" fill="#333"/><rect x="5" y="4" width="6" height="5" fill="#00ec78"/></svg>
<svg class="a" style="left:180px;top:838px" width="24" height="22" viewBox="0 0 24 22" ><rect x="0.5" y="8.7" width="9.0" height="2.6" fill="#111"/><rect x="3.7" y="5.5" width="2.6" height="9.0" fill="#111"/><rect x="11.5" y="1.5" width="10" height="18" fill="#fff" stroke="#999"/><path d="M13.5 5 H19.5 M13.5 8 H19.5 M13.5 11 H19.5 M13.5 14 H19.5 M13.5 17 H19.5" stroke="#999" stroke-width=".8"/></svg>
<svg class="a" style="left:211px;top:838px" width="24" height="22" viewBox="0 0 24 22" ><rect x="0.5" y="8.7" width="9.0" height="2.6" fill="#111"/><rect x="3.7" y="5.5" width="2.6" height="9.0" fill="#111"/><rect x="11.5" y="1.5" width="10" height="18" fill="#fff" stroke="#4fbf7f"/><path d="M11.5 10 H21.5" stroke="#4fbf7f"/><path d="M14 8 L19 3" stroke="#555" stroke-width=".8"/><circle cx="16.5" cy="14.5" r="2.5" fill="none" stroke="#555" stroke-width=".8"/></svg>
<div class="t" style="left:6.75px;top:870px;font-size:11.5px;letter-spacing:-0.444px;">876.7909 , 413.0935</div>
<div class="t" style="left:6.75px;top:886px;font-size:11.5px;letter-spacing:-0.325px;">969.2308 &lt; 25.23°</div>
<div class="t" style="left:198.40px;top:870px;font-size:11.5px;letter-spacing:-0.444px;">876.7909 , 413.0935</div>
<div class="t" style="left:198.40px;top:886px;font-size:11.5px;letter-spacing:-0.325px;">969.2308 &lt; 25.23°</div>
<div class="a" style="left:191px;top:867px;width:1px;height:33px;background:#d9d9d9;"></div>
<div class="a" style="left:383px;top:867px;width:1px;height:33px;background:#d9d9d9;"></div>
<div class="a" style="left:689px;top:867px;width:1px;height:33px;background:#d9d9d9;"></div>
<div class="a" style="left:809px;top:867px;width:1px;height:33px;background:#d9d9d9;"></div>
<div class="a" style="left:927px;top:867px;width:1px;height:33px;background:#d9d9d9;"></div>
<div class="a" style="left:998px;top:867px;width:1px;height:33px;background:#d9d9d9;"></div>
<svg class="a" style="left:527px;top:870px" width="24" height="24" viewBox="0 0 24 24" ><path d="M9 5 Q4 1 2 5" fill="none" stroke="#c33" stroke-width=".8"/><rect x="8.5" y="5.5" width="10" height="16" rx="4.5" fill="#fff" stroke="#333"/><path d="M8.5 11.5 H18.5 M13.5 5.5 V11.5" stroke="#333"/><path d="M9 11 V9 Q9 6 13 6 V11 Z" fill="#00ec78"/></svg>
<div class="t" style="left:695.00px;top:871px;font-size:11.5px;letter-spacing:-0.025px;">Selected Total Length</div>
<div class="t" style="left:695.00px;top:886px;font-size:11.5px;letter-spacing:0.000px;">0</div>
<div class="t" style="left:742.00px;top:886px;font-size:11.5px;letter-spacing:0.000px;">0</div>
<div class="t" style="left:814.60px;top:871px;font-size:11.5px;letter-spacing:0.013px;">Current Layer</div>
<div class="t" style="left:814.60px;top:886px;font-size:11.5px;letter-spacing:0.400px;">Contour</div>
<div class="t" style="left:936.60px;top:871px;font-size:11.5px;letter-spacing:-0.210px;">Grid Status</div>
<div class="t" style="left:936.60px;top:886px;font-size:11.5px;letter-spacing:-0.206px;">100 / 1000</div>
<svg class="a" style="left:1584px;top:886px" width="14" height="12" viewBox="0 0 14 12" ><g fill="#aaa"><rect x="10" y="1" width="2" height="2"/><rect x="7" y="4" width="2" height="2"/><rect x="10" y="4" width="2" height="2"/><rect x="4" y="7" width="2" height="2"/><rect x="7" y="7" width="2" height="2"/><rect x="10" y="7" width="2" height="2"/></g></svg>
<div class="a" style="left:48px;top:898px;width:1552px;height:1px;background:#d4d4d4;"></div>
<div class="a" style="left:49px;top:899px;width:1551px;height:1px;background:#fbfbfb;"></div>
</body></html>
